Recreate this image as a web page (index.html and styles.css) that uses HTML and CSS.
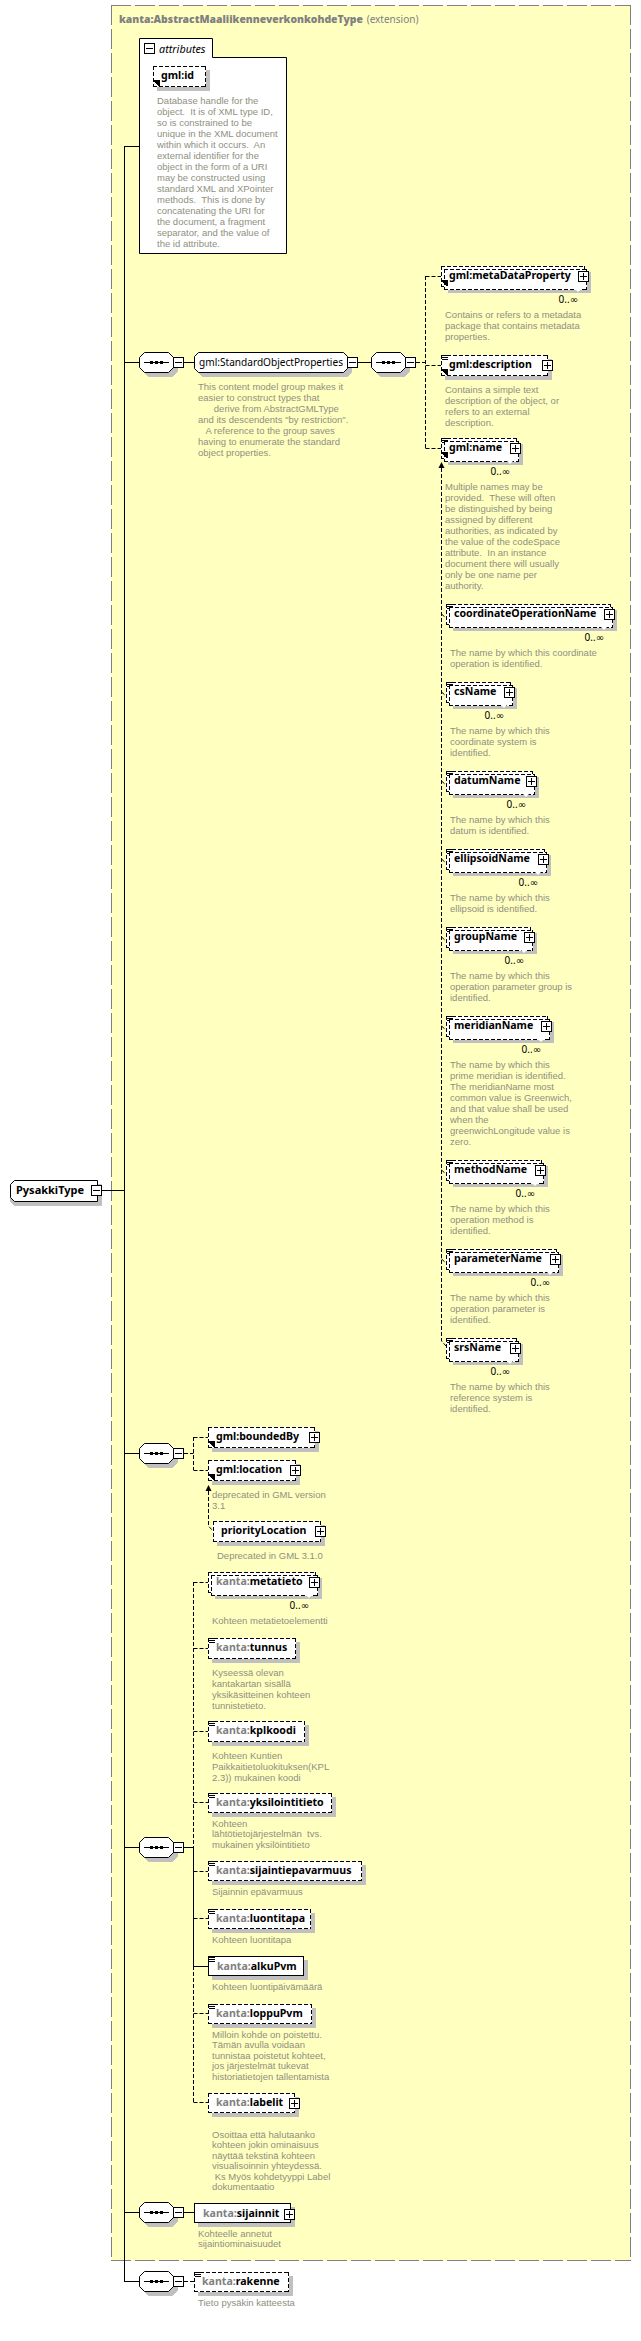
FILE: index.html
```html
<!DOCTYPE html>
<html lang="en">
<head>
<meta charset="utf-8">
<title>PysakkiType</title>
<link rel="stylesheet" href="styles.css">
</head>
<body>
<main class="canvas">
  <section class="frame">
    <h1 class="frame-title"><b>kanta:AbstractMaaliikenneverkonkohdeType</b> <span>(extension)</span></h1>
  </section>

  <svg class="wires" width="641" height="2341" viewBox="0 0 641 2341" aria-hidden="true">
    <defs>
      <path id="oct" d="M144.5 .5H168.5L173.5 5.5V15.5L168.5 20.5H144.5L139.5 15.5V5.5Z"/>
    </defs>
    <path class="tab" d="M139.5 38.5H212.5V57.5H286.5V253.5H139.5Z"/>
    <path class="solid" d="M102 1190.5H124.5M124.5 146V2282M124.5 146.5H139M124.5 362.5H139M124.5 1453.5H139M124.5 1847.5H139M124.5 2212.5H139M124.5 2281.5H139"/>
    <path class="solid" d="M184 362.5H194M357 362.5H371M184 1847.5H193.5M193.5 1847V1966.5H208M184 2212.5H194"/>
    <path class="dash" d="M416 362.5H425.5M425.5 276V448M425.5 276.5H441M425.5 365.5H441M425.5 448.5H441"/>
    <path class="dash" d="M441.5 468V1341L446 1346"/>
    <path class="dash" d="M441.5 614L446 618M441.5 692L446 696M441.5 781L446 785M441.5 859L446 863M441.5 937L446 941M441.5 1026L446 1030M441.5 1170L446 1174M441.5 1259L446 1263"/>
    <path class="head" d="M441.5 462L444.5 468H438.5Z"/>
    <path class="dash" d="M184 1453.5H193.5M193.5 1437V1470M193.5 1437.5H208M193.5 1470.5H208"/>
    <path class="dash" d="M208.5 1491V1526L213 1531"/>
    <path class="head" d="M208.5 1485L211.5 1491H205.5Z"/>
    <path class="dash" d="M193.5 1582V1847M193.5 1966V2102M193.5 1582.5H208M193.5 1648.5H208M193.5 1731.5H208M193.5 1802.5H208M193.5 1871.5H208M193.5 1918.5H208M193.5 2013.5H208M193.5 2102.5H208"/>
    <path class="dash" d="M184 2281.5H194"/>

    <path class="shade" d="M14.5 1184.5H101.5V1205.5H14.5L10.5 1201.5V1188.5Z"/>
    <path class="shape" d="M14.5 1180.5H97.5V1201.5H14.5L10.5 1197.5V1184.5Z"/>
    <path class="shade" d="M202.5 356.5H347.5L351.5 360.5V372.5L347.5 376.5H202.5L198.5 372.5V360.5Z"/>
    <path class="shape" d="M198.5 352.5H343.5L347.5 356.5V368.5L343.5 372.5H198.5L194.5 368.5V356.5Z"/>

    <use class="shade" href="#oct" x="4" y="356"/><use class="shape" href="#oct" y="352"/>
    <use class="shade" href="#oct" x="236" y="356"/><use class="shape" href="#oct" x="232" y="352"/>
    <use class="shade" href="#oct" x="4" y="1447"/><use class="shape" href="#oct" y="1443"/>
    <use class="shade" href="#oct" x="4" y="1841"/><use class="shape" href="#oct" y="1837"/>
    <use class="shade" href="#oct" x="4" y="2206"/><use class="shape" href="#oct" y="2202"/>
    <use class="shade" href="#oct" x="4" y="2275"/><use class="shape" href="#oct" y="2271"/>
  </svg>

  <div class="seq s1"><i class="seq-mark"></i><i class="tog minus"></i></div>
  <div class="seq s2"><i class="seq-mark"></i><i class="tog minus"></i></div>
  <div class="seq s3"><i class="seq-mark"></i><i class="tog minus"></i></div>
  <div class="seq s4"><i class="seq-mark"></i><i class="tog minus"></i></div>
  <div class="seq s5"><i class="seq-mark"></i><i class="tog minus"></i></div>
  <div class="seq s6"><i class="seq-mark"></i><i class="tog minus"></i></div>

  <div class="attr-head"><i class="tog minus"></i><em>attributes</em></div>

  <div class="root"><span class="root-name">PysakkiType</span><i class="tog minus"></i></div>

  <div class="node n-id">
    <div class="box opt ref">gml:id</div>
    <p class="doc">Database handle for the<br>object.  It is of XML type ID,<br>so is constrained to be<br>unique in the XML document<br>within which it occurs.  An<br>external identifier for the<br>object in the form of a URI<br>may be constructed using<br>standard XML and XPointer<br>methods.  This is done by<br>concatenating the URI for<br>the document, a fragment<br>separator, and the value of<br>the id attribute.</p>
  </div>

  <div class="node n-sop">
    <div class="group">gml:StandardObjectProperties<i class="tog minus"></i></div>
    <p class="doc">This content model group makes it<br>easier to construct types that<br>      derive from AbstractGMLType<br>and its descendents "by restriction".<br>   A reference to the group saves<br>having to enumerate the standard<br>object properties.</p>
  </div>

  <div class="node n-mdp">
    <div class="box opt ref multi">gml:metaDataProperty<i class="tog plus"></i></div>
    <div class="occ">0..∞</div>
    <p class="doc">Contains or refers to a metadata<br>package that contains metadata<br>properties.</p>
  </div>

  <div class="node n-desc">
    <div class="box opt ref text">gml:description<i class="tog plus"></i></div>
    <p class="doc">Contains a simple text<br>description of the object, or<br>refers to an external<br>description.</p>
  </div>

  <div class="node n-name">
    <div class="box opt ref text multi">gml:name<i class="tog plus"></i></div>
    <div class="occ">0..∞</div>
    <p class="doc">Multiple names may be<br>provided.  These will often<br>be distinguished by being<br>assigned by different<br>authorities, as indicated by<br>the value of the codeSpace<br>attribute.  In an instance<br>document there will usually<br>only be one name per<br>authority.</p>
  </div>

  <div class="node n-coord">
    <div class="box opt text multi">coordinateOperationName<i class="tog plus"></i></div>
    <div class="occ">0..∞</div>
    <p class="doc">The name by which this coordinate<br>operation is identified.</p>
  </div>

  <div class="node n-cs">
    <div class="box opt text multi">csName<i class="tog plus"></i></div>
    <div class="occ">0..∞</div>
    <p class="doc">The name by which this<br>coordinate system is<br>identified.</p>
  </div>

  <div class="node n-datum">
    <div class="box opt text multi">datumName<i class="tog plus"></i></div>
    <div class="occ">0..∞</div>
    <p class="doc">The name by which this<br>datum is identified.</p>
  </div>

  <div class="node n-ell">
    <div class="box opt text multi">ellipsoidName<i class="tog plus"></i></div>
    <div class="occ">0..∞</div>
    <p class="doc">The name by which this<br>ellipsoid is identified.</p>
  </div>

  <div class="node n-group">
    <div class="box opt text multi">groupName<i class="tog plus"></i></div>
    <div class="occ">0..∞</div>
    <p class="doc">The name by which this<br>operation parameter group is<br>identified.</p>
  </div>

  <div class="node n-mer">
    <div class="box opt text multi">meridianName<i class="tog plus"></i></div>
    <div class="occ">0..∞</div>
    <p class="doc">The name by which this<br>prime meridian is identified.<br>The meridianName most<br>common value is Greenwich,<br>and that value shall be used<br>when the<br>greenwichLongitude value is<br>zero.</p>
  </div>

  <div class="node n-meth">
    <div class="box opt text multi">methodName<i class="tog plus"></i></div>
    <div class="occ">0..∞</div>
    <p class="doc">The name by which this<br>operation method is<br>identified.</p>
  </div>

  <div class="node n-param">
    <div class="box opt text multi">parameterName<i class="tog plus"></i></div>
    <div class="occ">0..∞</div>
    <p class="doc">The name by which this<br>operation parameter is<br>identified.</p>
  </div>

  <div class="node n-srs">
    <div class="box opt text multi">srsName<i class="tog plus"></i></div>
    <div class="occ">0..∞</div>
    <p class="doc">The name by which this<br>reference system is<br>identified.</p>
  </div>

  <div class="node n-bound">
    <div class="box opt ref">gml:boundedBy<i class="tog plus"></i></div>
  </div>

  <div class="node n-loc">
    <div class="box opt ref">gml:location<i class="tog plus"></i></div>
    <p class="doc">deprecated in GML version<br>3.1</p>
  </div>

  <div class="node n-prio">
    <div class="box opt">priorityLocation<i class="tog plus"></i></div>
    <p class="doc">Deprecated in GML 3.1.0</p>
  </div>

  <div class="node n-meta">
    <div class="box opt multi"><s>kanta:</s>metatieto<i class="tog plus"></i></div>
    <div class="occ">0..∞</div>
    <p class="doc">Kohteen metatietoelementti</p>
  </div>

  <div class="node n-tunnus">
    <div class="box opt text"><s>kanta:</s>tunnus</div>
    <p class="doc">Kyseessä olevan<br>kantakartan sisällä<br>yksikäsitteinen kohteen<br>tunnistetieto.</p>
  </div>

  <div class="node n-kpl">
    <div class="box opt text"><s>kanta:</s>kplkoodi</div>
    <p class="doc">Kohteen Kuntien<br>Paikkaitietoluokituksen(KPL<br>2.3)) mukainen koodi</p>
  </div>

  <div class="node n-yks low">
    <div class="box opt text"><s>kanta:</s>yksilointitieto</div>
    <p class="doc">Kohteen<br>lähtötietojärjestelmän  tvs.<br>mukainen yksilöintitieto</p>
  </div>

  <div class="node n-sij low">
    <div class="box opt text"><s>kanta:</s>sijaintiepavarmuus</div>
    <p class="doc">Sijainnin epävarmuus</p>
  </div>

  <div class="node n-luo low">
    <div class="box opt text"><s>kanta:</s>luontitapa</div>
    <p class="doc">Kohteen luontitapa</p>
  </div>

  <div class="node n-alku low">
    <div class="box req text"><s>kanta:</s>alkuPvm</div>
    <p class="doc">Kohteen luontipäivämäärä</p>
  </div>

  <div class="node n-lop low">
    <div class="box opt text"><s>kanta:</s>loppuPvm</div>
    <p class="doc">Milloin kohde on poistettu.<br>Tämän avulla voidaan<br>tunnistaa poistetut kohteet,<br>jos järjestelmät tukevat<br>historiatietojen tallentamista</p>
  </div>

  <div class="node n-lab low">
    <div class="box opt"><s>kanta:</s>labelit<i class="tog plus"></i></div>
    <p class="doc far">Osoittaa että halutaanko<br>kohteen jokin ominaisuus<br>näyttää tekstinä kohteen<br>visualisoinnin yhteydessä.<br> Ks Myös kohdetyyppi Label<br>dokumentaatio</p>
  </div>

  <div class="node n-sijn low">
    <div class="box req"><s>kanta:</s>sijainnit<i class="tog plus"></i></div>
    <p class="doc">Kohteelle annetut<br>sijaintiominaisuudet</p>
  </div>

  <div class="node n-rak low">
    <div class="box opt text"><s>kanta:</s>rakenne</div>
    <p class="doc">Tieto pysäkin katteesta</p>
  </div>
</main>
</body>
</html>
```
FILE: styles.css
```css
* { box-sizing: border-box; }

html, body {
  margin: 0;
  padding: 0;
  background: #fff;
}

.canvas {
  position: relative;
  width: 641px;
  height: 2341px;
  overflow: hidden;
  font-family: "Noto Sans", "DejaVu Sans", sans-serif;
  color: #000;
}

/* extension frame */
.frame {
  position: absolute;
  left: 111px;
  top: 5px;
  width: 520px;
  height: 2256px;
  background-color: #ffffc0;
  --d: #808080;
  background-image:
    repeating-linear-gradient(90deg, var(--d) 0 20px, transparent 20px 24px),
    repeating-linear-gradient(90deg, var(--d) 0 20px, transparent 20px 24px),
    repeating-linear-gradient(180deg, var(--d) 0 20px, transparent 20px 24px),
    repeating-linear-gradient(180deg, var(--d) 0 20px, transparent 20px 24px);
  background-size: 100% 1px, 100% 1px, 1px 100%, 1px 100%;
  background-position: 0 0, 0 100%, 0 0, 100% 0;
  background-repeat: no-repeat;
}

.frame-title {
  margin: 0;
  padding: 8px 0 0 8px;
  font-size: 10.4px;
  font-weight: 700;
  line-height: 12px;
  color: #808080;
  white-space: nowrap;
}
.frame-title span { font-size: 10px; font-weight: 400; margin-left: 1px; }

/* connectors and outlines */
.wires { position: absolute; left: 0; top: 0; }
.wires { fill: none; stroke: #000; stroke-width: 1; }
.wires .dash { stroke-dasharray: 4 2; }
.wires .head { fill: #000; stroke: none; }
.wires .tab { fill: #fff; }
.wires .shape { fill: #fff; }
.wires .shade { fill: #c0c0c0; stroke: #c0c0c0; }

/* expand / collapse toggle */
.tog {
  position: absolute;
  width: 11px;
  height: 11px;
  background-color: #fff;
  border: 1px solid #000;
  z-index: 3;
}
.tog::before, .tog.plus::after {
  content: "";
  position: absolute;
  background: #000;
}
.tog::before { left: 1px; right: 1px; top: 4px; height: 1px; }
.tog.plus::after { top: 1px; bottom: 1px; left: 4px; width: 1px; }

/* sequence compositor */
.seq {
  position: absolute;
  left: 139px;
  width: 35px;
  height: 21px;
}
.seq .tog { left: 34px; top: 5px; }
.seq-mark {
  position: absolute;
  left: 5px;
  top: 10px;
  width: 25px;
  height: 1px;
  background: #000;
}
.seq-mark::before {
  content: "";
  position: absolute;
  left: 6px;
  top: -1px;
  width: 13px;
  height: 3px;
  background: repeating-linear-gradient(90deg, #000 0 3px, transparent 3px 5px);
}
.s1 { top: 352px; }
.s2 { left: 371px; top: 352px; }
.s3 { top: 1443px; }
.s4 { top: 1837px; }
.s5 { top: 2202px; }
.s6 { top: 2271px; }

/* attribute tab header */
.attr-head {
  position: absolute;
  left: 144px;
  top: 43px;
  height: 11px;
  padding-left: 15px;
  font-size: 10.8px;
  line-height: 11px;
  white-space: nowrap;
}
.attr-head .tog { left: 0; top: 0; }

/* root element */
.root {
  position: absolute;
  left: 10px;
  top: 1180px;
  width: 92px;
  height: 21px;
}
.root-name {
  display: block;
  padding-left: 6px;
  font-size: 11px;
  font-weight: 700;
  line-height: 20px;
}
.root .tog { left: 81px; top: 5px; }

/* element nodes */
.node { position: absolute; }

.box {
  position: relative;
  width: var(--w);
  height: 21px;
  padding-left: 8px;
  font-size: 10.6px;
  font-weight: 700;
  line-height: 19px;
  white-space: nowrap;
  background-color: #fff;
  box-shadow: 4px 4px 0 #c0c0c0;
}
.box s { text-decoration: none; color: #808080; }
.box.req { border: 1px solid #000; padding-left: 8px; line-height: 18px; }

.box.opt, .box.multi::before {
  --g: repeating-linear-gradient(90deg, #000 0 4px, transparent 4px 6px);
  --v: repeating-linear-gradient(180deg, #000 0 4px, transparent 4px 6px);
  background-image: var(--g), var(--g), var(--v), var(--v);
  background-size: 100% 1px, 100% 1px, 1px 100%, 1px 100%;
  background-position: 0 0, 0 100%, 0 0, 100% 0;
  background-repeat: no-repeat;
}

.box.multi { box-shadow: none; z-index: 1; }
.box.multi::before {
  content: "";
  position: absolute;
  z-index: -1;
  left: 3px;
  top: 3px;
  right: -2px;
  bottom: -3px;
  background-color: #fff;
  box-shadow: 4px 3px 0 #c0c0c0;
}

/* reference arrow, bottom left of a box */
.box.ref::after {
  content: "";
  position: absolute;
  left: 1px;
  bottom: 1px;
  width: 6px;
  height: 6px;
  background:
    linear-gradient(45deg, transparent 0 37%, #000 37% 63%, transparent 63%),
    linear-gradient(#000, #000) 100% 0 / 4px 2px no-repeat,
    linear-gradient(#000, #000) 100% 0 / 2px 4px no-repeat;
  z-index: 2;
}

/* simple content marker, top left of a box */
.box.text {
  background-image: var(--g), var(--g), var(--v), var(--v),
    linear-gradient(#000, #000), linear-gradient(#000, #000), linear-gradient(#000, #000);
  background-size: 100% 1px, 100% 1px, 1px 100%, 1px 100%, 6px 1px, 6px 1px, 6px 1px;
  background-position: 0 0, 0 100%, 0 0, 100% 0, 1px 0, 1px 2px, 1px 4px;
}
.box.req.text {
  background-image: linear-gradient(#000, #000), linear-gradient(#000, #000), linear-gradient(#000, #000);
  background-size: 6px 1px, 6px 1px, 6px 1px;
  background-position: 0 0, 0 2px, 0 4px;
  background-repeat: no-repeat;
}

.box .tog { top: 5px; right: -4px; }

/* group node */
.group {
  position: relative;
  width: 153px;
  height: 21px;
  padding-left: 5px;
  font-size: 10.1px;
  line-height: 20px;
  white-space: nowrap;
}
.group .tog { left: 153px; top: 5px; }

/* occurrence range with its notch under the stacked box */
.occ {
  position: relative;
  width: var(--w);
  height: 13px;
  margin-top: 6px;
  padding-right: 7px;
  font-size: 10px;
  line-height: 13px;
  text-align: right;
  white-space: nowrap;
}
.occ::before {
  content: "";
  position: absolute;
  z-index: 2;
  top: -5px;
  right: 3px;
  width: 8px;
  height: 4px;
  background: #fff;
  clip-path: polygon(0 0, 100% 0, 50% 100%);
}

.doc {
  margin: 8px 0 0 4px;
  font-family: "Liberation Sans", Arial, sans-serif;
  font-size: 9.5px;
  line-height: 11px;
  color: #8f8f80;
  white-space: pre;
}
.occ + .doc { margin-top: 3px; }
.low .box { height: 20px; }
.low .doc { margin-top: 6px; line-height: 10.4px; }
.low .doc.far { margin-top: 17px; }

/* node positions and box widths */
.n-id { left: 153px; top: 66px; --w: 53px; }

.n-sop { left: 194px; top: 352px; }

.n-mdp { left: 441px; top: 266px; --w: 144px; }
.n-desc { left: 441px; top: 355px; --w: 107px; }
.n-desc .tog { right: -5px; }
.n-name { left: 441px; top: 438px; --w: 76px; }

.n-coord, .n-cs, .n-datum, .n-ell, .n-group, .n-mer, .n-meth, .n-param, .n-srs { left: 446px; }
.n-coord { top: 604px; --w: 165px; }
.n-cs { top: 682px; --w: 65px; }
.n-datum { top: 771px; --w: 87px; }
.n-ell { top: 849px; --w: 99px; }
.n-group { top: 927px; --w: 85px; }
.n-mer { top: 1016px; --w: 102px; }
.n-meth { top: 1160px; --w: 96px; }
.n-param { top: 1249px; --w: 111px; }
.n-srs { top: 1338px; --w: 71px; }

.n-bound { left: 208px; top: 1427px; --w: 107px; }
.n-bound .tog { right: -5px; }
.n-loc { left: 208px; top: 1460px; --w: 88px; }
.n-loc .tog { right: -5px; }
.n-prio { left: 213px; top: 1521px; --w: 108px; }
.n-prio .tog { right: -5px; }

.n-meta { left: 208px; top: 1572px; --w: 108px; }
.n-tunnus { left: 208px; top: 1638px; --w: 88px; }
.n-kpl { left: 208px; top: 1721px; --w: 97px; }
.n-yks { left: 208px; top: 1793px; --w: 124px; }
.n-sij { left: 208px; top: 1861px; --w: 154px; }
.n-luo { left: 208px; top: 1909px; --w: 103px; }
.n-alku { left: 208px; top: 1956px; --w: 96px; }
.n-lop { left: 208px; top: 2004px; --w: 104px; }
.n-lab { left: 208px; top: 2093px; --w: 87px; }
.n-lab .tog { right: -5px; }
.n-sijn { left: 194px; top: 2203px; --w: 97px; }
.n-sijn .tog { right: -5px; }
.n-rak { left: 194px; top: 2272px; --w: 95px; }
```
